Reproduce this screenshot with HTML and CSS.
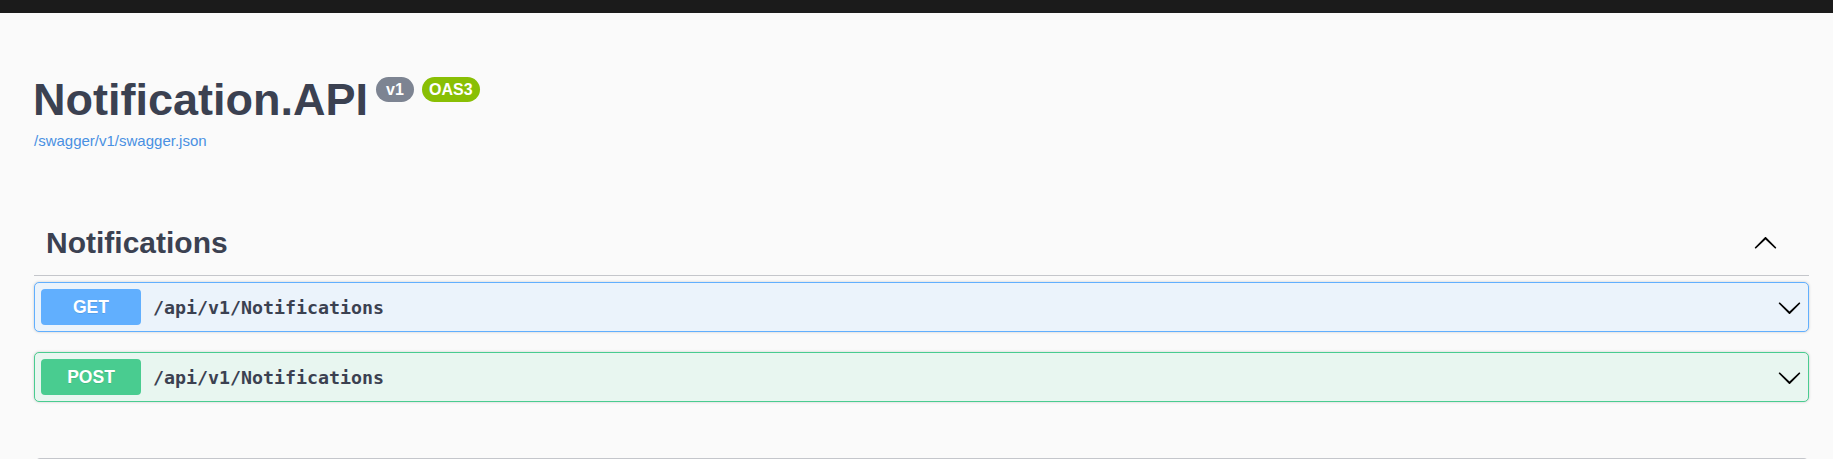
FILE: index.html
```html
<!DOCTYPE html>
<html lang="en">
<head>
<meta charset="utf-8">
<title>Notification.API</title>
<link rel="stylesheet" href="styles.css">
</head>
<body>
<div class="topbar"></div>
<div class="wrapper">
  <div class="info">
    <h2 class="title">
      <span class="title-text">Notification.API</span>
      <span class="badge badge-version">v1</span>
      <span class="badge badge-oas">OAS3</span>
    </h2>
    <a class="spec-link" href="#">/swagger/v1/swagger.json</a>
  </div>

  <section class="tag-section">
    <h3 class="tag">
      <span class="tag-name">Notifications</span>
      <svg class="arrow" width="25" height="25" viewBox="0 0 20 20"><path transform="rotate(180 10 10)" d="M17.418 6.109c.272-.268.709-.268.979 0s.271.701 0 .969l-7.908 7.83c-.27.268-.707.268-.979 0l-7.908-7.83c-.27-.268-.27-.701 0-.969.271-.268.709-.268.979 0L10 13.25l7.418-7.141z"/></svg>
    </h3>

    <div class="opblock opblock-get">
      <span class="method">GET</span>
      <span class="path">/api/v1/Notifications</span>
      <svg class="arrow" width="25" height="25" viewBox="0 0 20 20"><path d="M17.418 6.109c.272-.268.709-.268.979 0s.271.701 0 .969l-7.908 7.83c-.27.268-.707.268-.979 0l-7.908-7.830c-.27-.268-.27-.701 0-.969.271-.268.709-.268.979 0L10 13.25l7.418-7.141z"/></svg>
    </div>

    <div class="opblock opblock-post">
      <span class="method">POST</span>
      <span class="path">/api/v1/Notifications</span>
      <svg class="arrow" width="25" height="25" viewBox="0 0 20 20"><path d="M17.418 6.109c.272-.268.709-.268.979 0s.271.701 0 .969l-7.908 7.83c-.27.268-.707.268-.979 0l-7.908-7.830c-.27-.268-.27-.701 0-.969.271-.268.709-.268.979 0L10 13.25l7.418-7.141z"/></svg>
    </div>
  </section>

  <section class="models"></section>
</div>
</body>
</html>
```

FILE: styles.css
```css
html {
  overflow: hidden;
}

body {
  margin: 0;
  background: #fafafa;
  font-family: "Liberation Sans", Arial, sans-serif;
  color: #3b4151;
}

.topbar {
  height: 13px;
  background: #1b1b1b;
}

.wrapper {
  margin: 0 24px 0 34px;
}

.info {
  padding-top: 60px;
}

.title {
  display: flex;
  align-items: flex-start;
  margin: 0;
  font-size: 45px;
  line-height: 54px;
  font-weight: bold;
  color: #3b4151;
}

.title-text {
  margin-left: -1px;
}

.badge {
  display: inline-flex;
  align-items: center;
  justify-content: center;
  height: 25px;
  margin-top: 4px;
  margin-left: 8px;
  padding: 0 7px;
  border-radius: 13px;
  font-size: 16px;
  line-height: 25px;
  font-weight: bold;
  color: #fff;
}

.badge-version {
  min-width: 38px;
  box-sizing: border-box;
  background: #7d8492;
}

.badge-oas {
  min-width: 57px;
  box-sizing: border-box;
  background: #89bf04;
}

.spec-link {
  display: block;
  margin-top: 5px;
  font-size: 15px;
  line-height: 18px;
  color: #4990e2;
  text-decoration: none;
}

.tag {
  display: flex;
  align-items: center;
  justify-content: space-between;
  margin: 63px 0 0;
  padding: 12px 31px 14px 12px;
  border-bottom: 1px solid #c4c6cb;
  font-size: 30px;
  line-height: 36px;
  font-weight: bold;
  color: #3b4151;
}

.arrow {
  display: block;
  flex: none;
}

.opblock {
  display: flex;
  align-items: center;
  padding: 6px;
  border: 1px solid;
  border-radius: 5px;
  box-shadow: 0 0 3px rgba(0, 0, 0, 0.19);
}

.tag + .opblock {
  margin-top: 6px;
}

.opblock + .opblock {
  margin-top: 20px;
}

.opblock-get {
  background: #ebf3fb;
  border-color: #61affe;
}

.opblock-post {
  background: #e8f6f0;
  border-color: #49cc90;
}

.method {
  flex: none;
  width: 100px;
  height: 36px;
  line-height: 36px;
  border-radius: 4px;
  text-align: center;
  font-size: 17.5px;
  font-weight: bold;
  color: #fff;
  text-shadow: 0 1px 0 rgba(0, 0, 0, 0.1);
}

.opblock-get .method {
  background: #61affe;
}

.opblock-post .method {
  background: #49cc90;
}

.path {
  flex: 1;
  padding: 0 12px 0 12px;
  font-family: "DejaVu Sans Mono", "Liberation Mono", monospace;
  font-size: 18.3px;
  font-weight: bold;
  color: #3b4151;
}

.models {
  margin-top: 56px;
  margin-left: 1px;
  height: 60px;
  border: 1px solid #c4c6cb;
  border-radius: 5px;
}
```
